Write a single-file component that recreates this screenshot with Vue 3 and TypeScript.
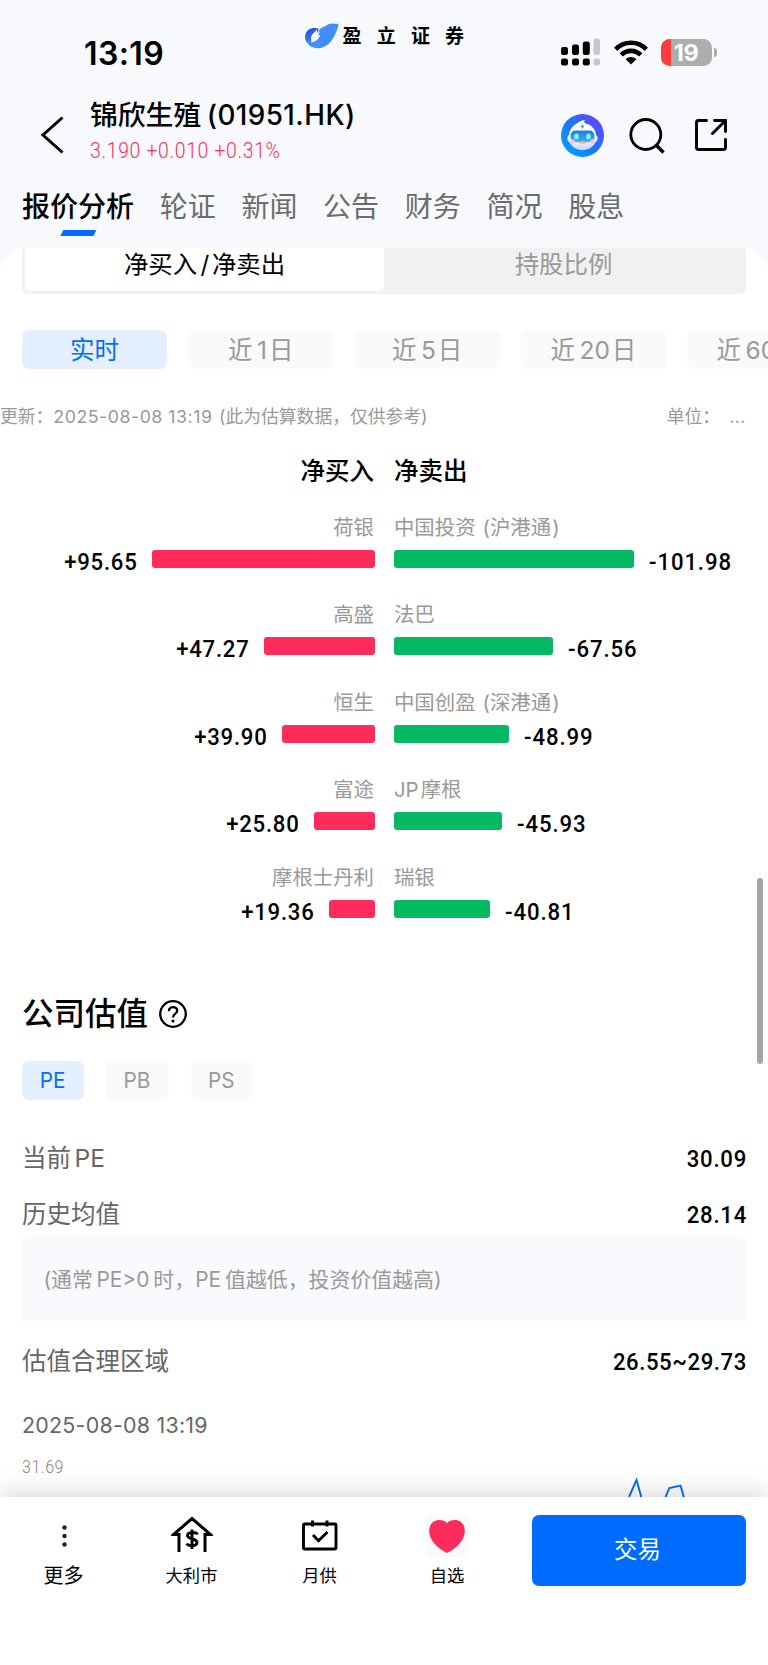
<script setup lang="ts">
interface Broker {
  name: string
  note?: string
  value: string
  width: number
}
interface Row {
  buy: Broker
  sell: Broker
}

const tabs: string[] = ['报价分析', '轮证', '新闻', '公告', '财务', '简况', '股息']
const ranges: [string, string, string][] = [
  ['实时', '', ''],
  ['近', '1', '日'],
  ['近', '5', '日'],
  ['近', '20', '日'],
  ['近', '60', '日'],
]
const metrics: string[] = ['PE', 'PB', 'PS']
const rows: Row[] = [
  { buy: { name: '荷银', value: '+95.65', width: 222.5 }, sell: { name: '中国投资', note: '沪港通', value: '-101.98', width: 240 } },
  { buy: { name: '高盛', value: '+47.27', width: 110.5 }, sell: { name: '法巴', value: '-67.56', width: 159 } },
  { buy: { name: '恒生', value: '+39.90', width: 93 }, sell: { name: '中国创盈', note: '深港通', value: '-48.99', width: 115 } },
  { buy: { name: '富途', value: '+25.80', width: 60.5 }, sell: { name: 'JP摩根', value: '-45.93', width: 108 } },
  { buy: { name: '摩根士丹利', value: '+19.36', width: 45.5 }, sell: { name: '瑞银', value: '-40.81', width: 96 } },
]
</script>

<template>
  <div class="page">
    <div class="status">
      <span class="clock">13:19</span>
      <div class="brand">
        <svg width="34" height="26" viewBox="0 0 34 26">
          <defs>
            <linearGradient id="orb" x1="0" y1="0" x2="0" y2="1">
              <stop offset="0" stop-color="#2a50d4" />
              <stop offset="1" stop-color="#3f7ff0" />
            </linearGradient>
          </defs>
          <path d="M7 5.200C10 4.600 12.500 5.200 14 6L12 10L6.500 14L6.500 21L3 20.500C1 18.500 0 16.500 0 14C0 9.500 3 6 7 5.200Z" fill="url(#orb)" />
          <path d="M33.500 .6C31.500 1.500 29.500 .6 27.500 .4C24.500 .2 22.500 1.500 20.500 3C18.500 4.300 17 3.800 15 6L12.500 11L6.500 19L1 17.500C2.500 22 7 25.300 13 25.200C20.500 25 26 20 29 13.500C30.800 9.500 33.300 6 33.500 .6Z" fill="#418ff5" />
          <path d="M12 5.800C11 9 6.800 10.300 6.200 14C6 16 6.900 17 6.300 19.800C9.500 18.300 13.500 17.500 15.300 12L13 12.200L14.800 9.500L11.700 9.600Z" fill="#f8f9fd" />
        </svg>
        <span class="brand-name">盈立证券</span>
      </div>
      <div class="indicators">
        <svg width="40" height="28" viewBox="0 0 40 28">
          <g>
            <rect x="0" y="9" width="7" height="8" rx="2.200" />
            <rect x="11" y="6.500" width="7" height="10.500" rx="2.200" />
            <rect x="21.800" y="3.500" width="7" height="13.500" rx="2.200" />
            <rect x="0" y="20.500" width="7" height="7" rx="2.300" />
            <rect x="11" y="20.500" width="7" height="7" rx="2.300" />
            <rect x="21.800" y="20.500" width="7" height="7" rx="2.300" />
          </g>
          <g fill="#c6c7ca">
            <rect x="32.500" y=".5" width="6.500" height="16.500" rx="2.200" />
            <rect x="32.500" y="20.500" width="6.500" height="7" rx="2.300" />
          </g>
        </svg>
        <svg class="wifi" width="34" height="25" viewBox="0 0 34 25">
          <g fill="none" stroke="#000" stroke-width="4.600">
            <path d="M1.700 9.300C10 .6 24 .6 32.300 9.300" />
            <path d="M7.200 14.900C12.800 9.500 21.200 9.500 26.800 14.900" />
          </g>
          <path d="M17 24.500L11.700 19.200C14.600 16.400 19.400 16.400 22.300 19.200Z" />
        </svg>
        <div class="battery"><span>19</span></div>
        <i class="nub"></i>
      </div>
    </div>

    <header class="header">
      <svg class="back" width="24" height="38" viewBox="0 0 24 38">
        <path d="M21.500 1.500L2 19L21.500 36.500" fill="none" stroke="#000" stroke-width="2.900" />
      </svg>
      <div class="stock">
        <div class="stock-name">锦欣生殖<span class="code">(01951.HK)</span></div>
        <div class="quote">3.190 +0.010 +0.31%</div>
      </div>
      <svg class="bot" width="43" height="43" viewBox="0 0 43 43">
        <defs>
          <linearGradient id="botBg" x1=".1" y1=".9" x2=".9" y2=".1">
            <stop offset="0" stop-color="#00a2ff" />
            <stop offset=".5" stop-color="#1c76fa" />
            <stop offset="1" stop-color="#6a40ff" />
          </linearGradient>
          <linearGradient id="visor" x1="0" y1="0" x2="0" y2="1">
            <stop offset="0" stop-color="#2878d8" />
            <stop offset="1" stop-color="#35b4f2" />
          </linearGradient>
          <linearGradient id="face" x1="0" y1="0" x2="0" y2="1">
            <stop offset=".5" stop-color="#fff" />
            <stop offset="1" stop-color="#c9d4ff" />
          </linearGradient>
        </defs>
        <circle cx="21.500" cy="21.500" r="21.500" fill="url(#botBg)" />
        <path d="M24 6C19 6.500 17.500 8.500 13.500 11C9.500 14 8.500 18 8 21C5.500 23 6 27 8.800 28.500C11 33.500 16 36 21.500 36C27 36 32 33.500 34.200 28.500C37 27 37.500 23 35 21C34.500 15 30.500 10.500 24 9.200C22.800 8.500 23 7 24 6Z" fill="url(#face)" />
        <rect x="9.500" y="16.500" width="24" height="11.500" rx="5" fill="url(#visor)" />
        <ellipse cx="15.500" cy="22.500" rx="2.300" ry="3" fill="#7ff4f4" />
        <ellipse cx="27.500" cy="22.500" rx="2.300" ry="3" fill="#7ff4f4" />
        <path d="M22.500 9.500L19.500 13H21.500L20.500 15.500L23.500 12.300H21.500Z" fill="#2878e8" />
        <path d="M17 28.200Q21.500 25.200 26 28.200Q21.500 31 17 28.200Z" fill="#ff9d92" />
        <circle cx="11.500" cy="27.500" r="2.300" fill="#ffbfd8" />
        <circle cx="31.500" cy="27.500" r="2.300" fill="#ffbfd8" />
      </svg>
      <svg class="search" width="36" height="36" viewBox="0 0 36 36" fill="none" stroke="#000" stroke-width="2.800">
        <circle cx="16.800" cy="16.500" r="15" />
        <path d="M27 27L34.500 34.500" stroke-width="3.400" />
      </svg>
      <svg class="share" width="32" height="32" viewBox="0 0 32 32" fill="none" stroke="#000" stroke-width="2.900" stroke-linecap="round">
        <path d="M11.500 1.500H3.500Q1.500 1.500 1.500 3.500V28.500Q1.500 30.500 3.500 30.500H28.500Q30.500 30.500 30.500 28.500V20.500" />
        <path d="M19.500 1.500H30.500V12.500M30 2L17.500 14.500" />
      </svg>
    </header>

    <nav class="tabs">
      <span v-for="(t, i) in tabs" :key="t" class="tab" :class="{ active: i === 0 }">{{ t }}</span>
    </nav>

    <main class="panel">
      <div class="segment">
        <div class="seg on">净买入<span class="slash">/</span>净卖出</div>
        <div class="seg">持股比例</div>
      </div>

      <div class="ranges">
        <div v-for="(r, i) in ranges" :key="i" class="chip" :class="{ on: i === 0 }">
          {{ r[0] }}<span v-if="r[1]" class="digits">{{ r[1] }}</span>{{ r[2] }}
        </div>
      </div>

      <div class="update">
        <span>更新：<span class="stamp">2025-08-08 13:19</span><span class="paren">(</span>此为估算数据，仅供参考<span>)</span></span>
        <span class="unit">单位：<span class="dots">...</span></span>
      </div>

      <section class="flows">
        <div class="pair heads"><span class="left">净买入</span><span>净卖出</span></div>
        <div v-for="row in rows" :key="row.buy.name" class="flow">
          <div class="pair names">
            <span class="left">{{ row.buy.name }}</span>
            <span v-if="row.sell.note">{{ row.sell.name }}<span class="open">(</span>{{ row.sell.note }}<span class="close">)</span></span>
            <span v-else-if="row.sell.name.startsWith('JP')"><span class="jp">JP</span>{{ row.sell.name.slice(2) }}</span>
            <span v-else>{{ row.sell.name }}</span>
          </div>
          <div class="pair bars">
            <div class="side left">
              <span class="num r">{{ row.buy.value }}</span>
              <i class="bar red" :style="{ width: row.buy.width + 'px' }"></i>
            </div>
            <div class="side">
              <i class="bar green" :style="{ width: row.sell.width + 'px' }"></i>
              <span class="num l">{{ row.sell.value }}</span>
            </div>
          </div>
        </div>
      </section>

      <section class="valuation">
        <h2>
          <span>公司估值</span>
          <svg width="28" height="28" viewBox="0 0 28 28" fill="none" stroke="#000" stroke-width="2.300">
            <circle cx="14" cy="14" r="12.800" />
            <path d="M9.900 11.200C9.900 5.800 18.200 5.800 18.200 10.800C18.200 13.800 14 13.700 14 17.500" />
            <circle cx="14" cy="21" r="1.600" fill="#000" stroke="none" />
          </svg>
        </h2>
        <div class="metrics">
          <span v-for="(m, i) in metrics" :key="m" class="metric" :class="{ on: i === 0 }">{{ m }}</span>
        </div>
        <div class="line"><span>当前<span class="pe">PE</span></span><span class="num r">30.09</span></div>
        <div class="line"><span>历史均值</span><span class="num r">28.14</span></div>
        <div class="hint">(通常<span class="pe">PE&gt;0</span><span class="after">时</span>，<span>PE</span><span class="after">值</span>越低，投资价值越高)</div>
        <div class="line zone"><span>估值合理区域</span><span class="num r">26.55~29.73</span></div>
        <div class="time">2025-08-08 13:19</div>
        <div class="axis">31.69</div>
      </section>
      <svg class="chart" width="70" height="24" viewBox="0 0 70 24" fill="none" stroke="#006bff" stroke-width="1.900">
        <path d="M3 24L10.500 7L15.300 24M39.500 24L43.300 15L54.500 12.500L57.800 24" />
      </svg>
      <i class="scrollbar"></i>
    </main>

    <footer class="dock">
      <div class="item more">
        <svg width="42" height="42" viewBox="0 0 42 42" fill="#222">
          <circle cx="21.500" cy="12.500" r="2.200" /><circle cx="21.500" cy="21" r="2.200" /><circle cx="21.500" cy="29.500" r="2.200" />
        </svg>
        <span>更多</span>
      </div>
      <div class="item">
        <svg width="42" height="42" viewBox="0 0 42 42" fill="none" stroke="#000" stroke-width="3">
          <path d="M8 37V19.500H2.500L21 3.500L39.500 19.500H34V37" stroke-linejoin="miter" />
          <path d="M26.500 19.500C25.500 16.800 16.500 16.500 16.500 20.700C16.500 24.500 26 23 26 27.500C26 31.500 17 31.500 15.800 28.500M21 14.500V34" stroke-width="2.900" />
        </svg>
        <span>大利市</span>
      </div>
      <div class="item">
        <svg width="42" height="42" viewBox="0 0 42 42" fill="none" stroke="#000" stroke-width="2.900" stroke-linejoin="round">
          <rect x="4.500" y="9" width="32.500" height="25" rx="1" />
          <path d="M13.500 5.500V11.500M28 5.500V11.500" />
          <path d="M14 20L19.500 25.700L28.500 17" stroke-linejoin="miter" />
        </svg>
        <span>月供</span>
      </div>
      <div class="item">
        <svg width="42" height="42" viewBox="0 0 42 42">
          <rect width="42" height="42" fill="#fafafa" />
          <path d="M21 38C11 33.500 3.200 24.500 3.200 16C3.200 9 7.500 5 13 5C16.500 5 19.300 6 21 8.200C22.700 6 25.500 5 29 5C34.500 5 38.800 9 38.800 16C38.800 24.500 31 33.500 21 38Z" fill="#ff2b5a" />
        </svg>
        <span>自选</span>
      </div>
      <button class="trade">交易</button>
    </footer>
  </div>
</template>

<style>
body {
  margin: 0;
}
</style>

<style scoped>
.page {
  width: 768px;
  height: 1665px;
  overflow: hidden;
  display: flex;
  flex-direction: column;
  background: #f8f9fc;
  color: #000;
  font-family: Inter, "Noto Sans CJK SC", sans-serif;
  white-space: nowrap;
}
svg {
  display: block;
  flex: none;
}
i {
  display: block;
  flex: none;
}
.num,
.quote,
.axis {
  font-family: Roboto, sans-serif;
  font-weight: 500;
  font-size: 24.600px;
  letter-spacing: 0.850px;
  transform: scaleX(0.9);
  display: inline-block;
}
.num.r {
  transform-origin: 100% 50%;
  margin-right: -0.500px;
}
.num.l {
  transform-origin: 0 50%;
  letter-spacing: 1px;
}

.status {
  height: 92px;
  display: grid;
  grid-template-columns: 305px 256px 1fr;
  align-items: start;
}
.clock {
  font-size: 32px;
  font-weight: 600;
  letter-spacing: 0.400px;
  line-height: 40px;
  padding: 33.500px 0 0 84px;
}
.brand {
  display: flex;
  align-items: flex-start;
  padding-top: 23px;
}
.brand-name {
  font-size: 19px;
  font-weight: 700;
  letter-spacing: 15.200px;
  line-height: 26px;
  margin: 1px 0 0 3.500px;
}
.indicators {
  display: flex;
  align-items: center;
  padding-top: 38px;
}
.wifi {
  margin-left: 12.500px;
}
.battery {
  width: 51px;
  height: 27px;
  margin-left: 13px;
  border-radius: 8.500px;
  background: linear-gradient(90deg, #ff3b3d 0 10px, #adadb0 10px);
  color: #fff;
  font-size: 23.500px;
  font-weight: 700;
  line-height: 27px;
  text-align: center;
  letter-spacing: -0.5px;
}
.nub {
  width: 3px;
  height: 9px;
  margin-left: 2px;
  border-radius: 0 4px 4px 0;
  background: #adadb0;
}

.header {
  height: 88px;
  display: flex;
  align-items: flex-start;
}
.back {
  margin: 24px 0 0 40.500px;
}
.stock {
  width: 471px;
  margin-left: 25.500px;
}
.stock-name {
  font-size: 27.800px;
  font-weight: 500;
  line-height: 40px;
  margin-top: 3px;
}
.code {
  margin-left: 5.500px;
  letter-spacing: 0.450px;
}
.quote {
  font-size: 21.600px;
  font-weight: 300;
  letter-spacing: 0.720px;
  line-height: 30px;
  margin-top: 1px;
  color: #ff2e60;
  transform-origin: 0 50%;
}
.bot {
  margin-top: 22px;
}
.search {
  margin: 26px 0 0 25px;
}
.share {
  margin: 27px 0 0 30px;
}

.tabs {
  height: 68px;
  padding-left: 22px;
  display: flex;
  gap: 25.700px;
  font-size: 28px;
  line-height: 55px;
  color: #6b6c6f;
}
.tab {
  display: flex;
  flex-direction: column;
  align-items: center;
}
.tab.active {
  color: #000;
  font-weight: 500;
}
.tab.active::after {
  content: "";
  width: 33px;
  height: 5.500px;
  margin: -5px 0 0 1px;
  background: #006bff;
  transform: skewX(-28deg);
}

.panel {
  position: relative;
  height: 1249px;
  overflow: hidden;
  background: #fff;
  border-radius: 25px 25px 0 0;
}
.segment {
  height: 43px;
  margin: 0 22px;
  padding: 0 3px 3px;
  display: grid;
  grid-template-columns: 1fr 1fr;
  background: #f1f1f1;
  border-radius: 0 0 6px 6px;
  font-size: 24.400px;
}
.seg {
  text-align: center;
  line-height: 32px;
  color: #999;
}
.seg.on {
  color: #000;
  background: #fff;
  border-radius: 0 0 5px 5px;
}
.slash {
  margin: 0 2.500px 0 3.500px;
}
.ranges {
  margin: 36px 0 0 22px;
  display: flex;
  gap: 21.300px;
  font-size: 24.500px;
}
.chip {
  flex: none;
  width: 145px;
  height: 39px;
  border-radius: 7px;
  background: #fafafa;
  color: #999;
  text-align: center;
  line-height: 40px;
}
.chip.on,
.metric.on {
  background: #e4efff;
  color: #006bff;
}
.digits {
  margin: 0 2px 0 4.500px;
}
.update {
  height: 30px;
  margin-top: 33px;
  padding-right: 22px;
  display: flex;
  justify-content: space-between;
  font-size: 17.800px;
  line-height: 30px;
  color: #999;
}
.stamp {
  letter-spacing: 0.500px;
}
.paren {
  margin-left: 6.500px;
}
.dots {
  margin-left: 9px;
  letter-spacing: 0.500px;
}

.flows {
  padding-top: 23.500px;
}
.pair {
  display: grid;
  grid-template-columns: 374.700px 374px;
  column-gap: 19.300px;
}
.pair > .left {
  text-align: right;
  justify-content: flex-end;
}
.heads {
  font-size: 24.500px;
  font-weight: 500;
  line-height: 30px;
  height: 57px;
}
.names {
  font-size: 20.400px;
  line-height: 30px;
  height: 30px;
  color: #999;
}
.names > .left,
.heads > .left {
  padding-right: 0.700px;
}
.open {
  margin-left: 7px;
}
.close {
  margin-left: 1px;
}
.jp {
  margin-right: 2px;
}
.flow {
  height: 87.500px;
}
.side {
  display: flex;
  gap: 15px;
  padding-top: 7px;
}
.bar {
  height: 18px;
  border-radius: 3px;
}
.red {
  background: #ff2b5a;
}
.green {
  background: #05b962;
}
.bars .num {
  line-height: 23px;
}

.valuation {
  padding: 42.500px 22px 0;
}
h2 {
  margin: 0;
  height: 42px;
  display: flex;
  align-items: center;
  gap: 11px;
  font-size: 31.500px;
  font-weight: 500;
}
h2 span {
  line-height: 42px;
  padding-top: 1px;
}
.metrics {
  display: flex;
  gap: 22px;
  margin: 26px 0 33.500px;
}
.metric {
  width: 62.300px;
  height: 39px;
  line-height: 39px;
  border-radius: 7px;
  background: #fafafa;
  color: #999;
  font-size: 20.800px;
  text-align: center;
  text-indent: -1px;
}
.line {
  display: flex;
  justify-content: space-between;
  height: 55.500px;
  line-height: 50px;
  font-size: 24.500px;
  color: #666;
}
.line .num {
  color: #000;
  line-height: 52px;
}
.pe {
  margin-left: 3.500px;
}
.hint {
  height: 85px;
  line-height: 87px;
  margin-top: -8px;
  padding-left: 21.500px;
  border-radius: 7px;
  background: #f9fafd;
  color: #999;
  font-size: 20.900px;
}
.after {
  margin-left: 4px;
}
.zone {
  margin-top: 15px;
}
.zone .num {
  letter-spacing: 0.650px;
}
.time {
  margin-top: 13.500px;
  height: 40px;
  line-height: 40px;
  font-size: 21.400px;
  letter-spacing: 0.250px;
  color: #666;
}
.axis {
  display: block;
  font-weight: 300;
  font-size: 17.800px;
  letter-spacing: 0.600px;
  line-height: 24px;
  margin-top: 10px;
  color: #888;
  transform-origin: 0 50%;
}
.chart {
  position: absolute;
  left: 626px;
  bottom: 0;
}
.scrollbar {
  position: absolute;
  left: 757px;
  top: 629.500px;
  width: 5.500px;
  height: 186.500px;
  border-radius: 3px;
  background: #a6a6a6;
}

.dock {
  position: relative;
  height: 168px;
  box-sizing: border-box;
  padding: 17.500px 22px 0 0;
  display: grid;
  grid-template-columns: 128px 127px 129px 126px 1fr;
  background: #fff;
  box-shadow: 0 0 28px rgba(0, 0, 0, 0.2);
}
.item {
  display: flex;
  flex-direction: column;
  align-items: center;
  font-size: 17.300px;
  line-height: 38px;
}
.more {
  font-size: 20px;
  padding-right: 1px;
}
.trade {
  height: 71.500px;
  margin-left: 22px;
  border: 0;
  border-radius: 7px;
  background: #006bff;
  color: #fff;
  font: 400 23.500px/70px Inter, "Noto Sans CJK SC", sans-serif;
  padding: 0 3px 0 0;
}
</style>
